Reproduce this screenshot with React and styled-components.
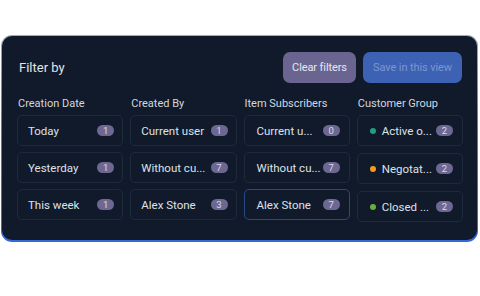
import styled, { createGlobalStyle } from "styled-components";

const GlobalStyle = createGlobalStyle`
body{
    margin: 0;
    background: #FFFFFF;
    font-family: Roboto, "Liberation Sans", sans-serif;
}
`

const columns = [
    {
        title: "Creation Date",
        items: [
            { label: "Today", count: 1 },
            { label: "Yesterday", count: 1 },
            { label: "This week", count: 1 },
        ],
    },
    {
        title: "Created By",
        items: [
            { label: "Current user", count: 1 },
            { label: "Without cu...", count: 7 },
            { label: "Alex Stone", count: 3 },
        ],
    },
    {
        title: "Item Subscribers",
        inset: true,
        items: [
            { label: "Current u...", count: 0 },
            { label: "Without cu...", count: 7 },
            { label: "Alex Stone", count: 7, selected: true },
        ],
    },
    {
        title: "Customer Group",
        inset: true,
        loose: true,
        items: [
            { label: "Active o...", count: 2, dot: "#1d9e85" },
            { label: "Negotat...", count: 2, dot: "#f29b1f" },
            { label: "Closed ...", count: 2, dot: "#6aae3e" },
        ],
    },
]

export default function App(){
    return(
        <>
            <GlobalStyle/>
            <Frame>
                <Panel>
                    <TopBar>
                        <Title>Filter by</Title>
                        <Actions>
                            <Button>Clear filters</Button>
                            <Button primary>Save in this view</Button>
                        </Actions>
                    </TopBar>
                    <Columns>
                        {columns.map((col) => (
                            <Column key={col.title}>
                                <ColumnTitle>{col.title}</ColumnTitle>
                                <List loose={col.loose}>
                                    {col.items.map((item) => (
                                        <Option key={item.label} selected={item.selected} inset={col.inset}>
                                            <Label>
                                                {item.dot && <Dot color={item.dot}/>}
                                                {item.label}
                                            </Label>
                                            <Badge>{item.count}</Badge>
                                        </Option>
                                    ))}
                                </List>
                            </Column>
                        ))}
                    </Columns>
                </Panel>
            </Frame>
        </>
    )
}

const Frame = styled.div`
margin: 35px 2px 0 1px;
padding: 1px 1px 2px 1px;
border-radius: 11px;
background: linear-gradient(180deg, #a3a8b4 0%, #5f78b8 45%, #3468d6 100%);
`
const Panel = styled.div`
background-color: #111a2b;
border-radius: 10px;
padding: 16px 14px 18px 15px;
display: flex;
flex-direction: column;
`
const TopBar = styled.div`
display: flex;
justify-content: space-between;
align-items: center;
`
const Title = styled.div`
color: #e1e4ea;
font-size: 13px;
margin-left: 2px;
`
const Actions = styled.div`
display: flex;
gap: 7px;
margin-right: 1px;
`
const Button = styled.button`
height: 31px;
width: ${(p) => (p.primary ? "99px" : "73px")};
padding: 0;
border: none;
border-radius: 7px;
white-space: nowrap;
font-family: Roboto, "Liberation Sans", sans-serif;
font-size: 11px;
letter-spacing: -0.1px;
background-color: ${(p) => (p.primary ? "#3d62b4" : "#6a6590")};
color: ${(p) => (p.primary ? "#7f95cd" : "#e8e6f0")};
`
const Columns = styled.div`
display: grid;
grid-template-columns: repeat(4, 1fr);
column-gap: 7px;
margin-top: 14px;
`
const Column = styled.div`
display: flex;
flex-direction: column;
`
const ColumnTitle = styled.div`
color: #d3d7df;
font-size: 11px;
line-height: 14px;
margin-left: 1px;
margin-bottom: 4px;
`
const List = styled.div`
display: flex;
flex-direction: column;
gap: ${(p) => (p.loose ? "7px" : "6px")};
`
const Option = styled.div`
height: 31px;
box-sizing: border-box;
display: flex;
align-items: center;
justify-content: space-between;
padding: ${(p) => (p.inset ? "0 9px 0 12px" : "0 8px 0 10px")};
border: 1px solid ${(p) => (p.selected ? "#294987" : "#1f2a3d")};
border-radius: 5px;
background-color: #111a2b;
`
const Label = styled.div`
display: flex;
align-items: center;
gap: 6px;
color: #dde1e8;
font-size: 11.5px;
white-space: nowrap;
`
const Dot = styled.span`
width: 6px;
height: 6px;
border-radius: 50%;
background-color: ${(p) => p.color};
`
const Badge = styled.div`
width: 17px;
height: 11px;
border-radius: 6px;
background-color: #6d6892;
color: #dcdaea;
font-size: 9.5px;
line-height: 11px;
text-align: center;
`
